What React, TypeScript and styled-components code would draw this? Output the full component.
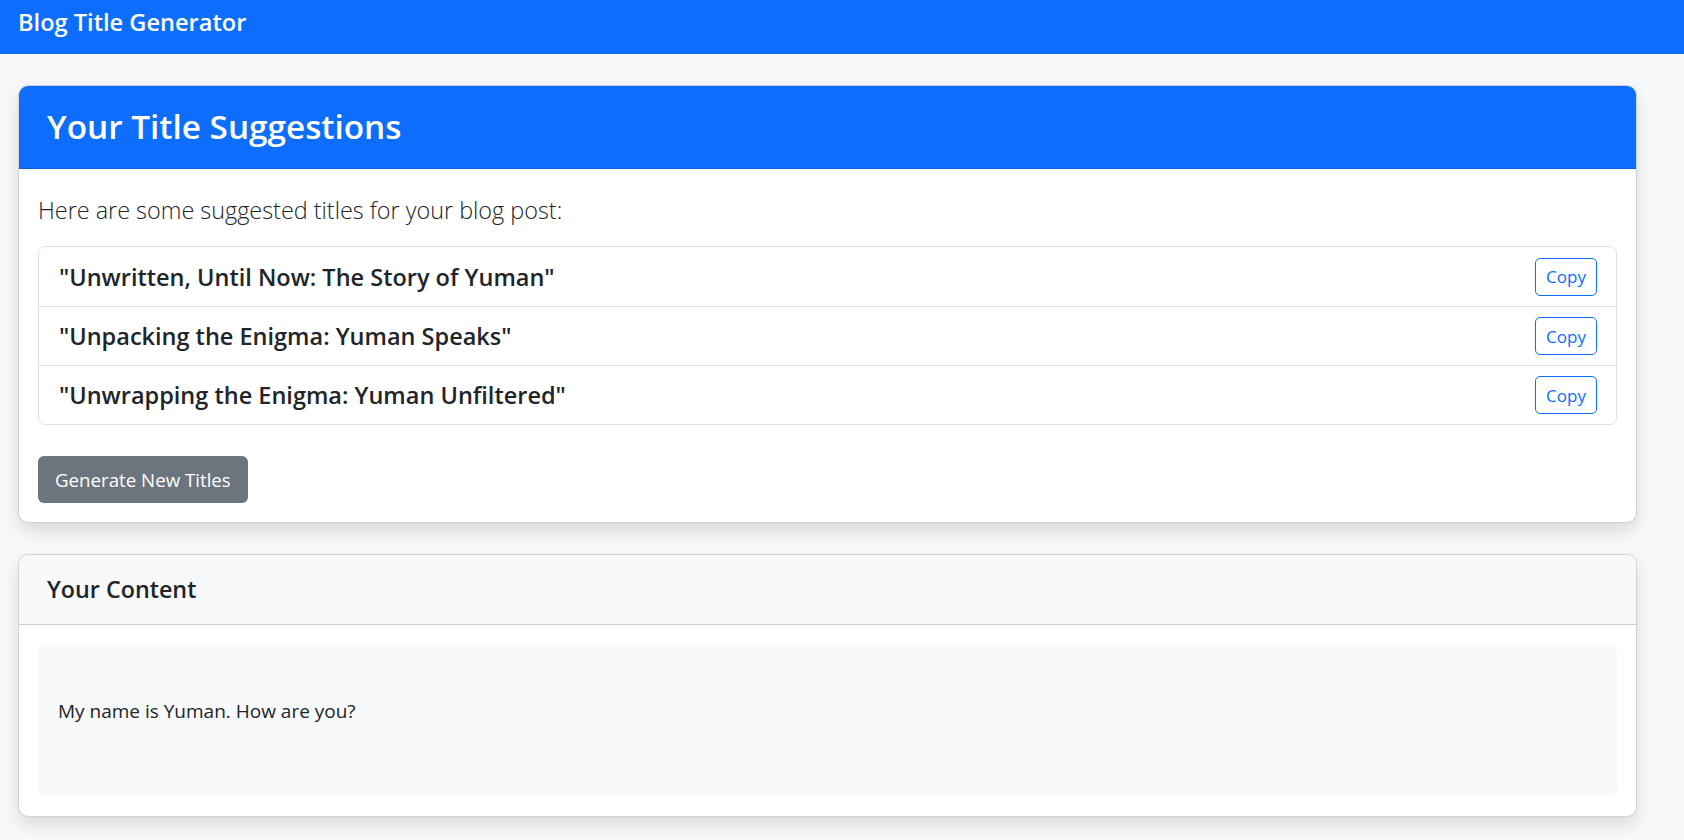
import React from "react";
import styled, { createGlobalStyle } from "styled-components";

const Global = createGlobalStyle`
  html, body { margin: 0; padding: 0; }
  body {
    background: #f8f9fa;
    font-family: "Segoe UI", "Open Sans", "Noto Sans", sans-serif;
    color: #212529;
  }
  * { box-sizing: border-box; }
`;

const Navbar = styled.header`
  height: 54px;
  background: #0d6efd;
  padding: 6px 18px 0;
  display: flex;
  align-items: flex-start;
`;

const Brand = styled.div`
  color: #fff;
  font-size: 23.6px;
  font-weight: 600;
  line-height: 32px;
`;

const Main = styled.main`
  padding: 31px 47px 25px 18px;
  display: flex;
  flex-direction: column;
  gap: 31px;
`;

const Card = styled.section`
  background: #fff;
  border: 1px solid rgba(0, 0, 0, 0.175);
  border-radius: 10px;
  box-shadow: 0 8px 18px rgba(0, 0, 0, 0.13);
  overflow: hidden;
`;

const CardHeader = styled.div<{ $variant: "primary" | "light" }>`
  display: flex;
  align-items: center;
  padding: 0 28px;
  height: ${(p) => (p.$variant === "primary" ? "83px" : "70px")};
  background: ${(p) => (p.$variant === "primary" ? "#0d6efd" : "#f8f9fa")};
  color: ${(p) => (p.$variant === "primary" ? "#fff" : "#212529")};
  border-bottom: 1px solid
    ${(p) => (p.$variant === "primary" ? "#0b5ed7" : "rgba(0,0,0,0.175)")};
`;

const HeaderTitle = styled.h2<{ $size: number }>`
  margin: 0;
  font-size: ${(p) => p.$size}px;
  font-weight: 600;
  line-height: 1.2;
`;

const CardBody = styled.div<{ $top: number; $bottom: number }>`
  padding: ${(p) => p.$top}px 19px ${(p) => p.$bottom}px;
`;

const Lead = styled.p`
  margin: 0 0 17px;
  font-size: 23.4px;
  font-weight: 300;
  line-height: 38px;
`;

const List = styled.ul`
  list-style: none;
  margin: 0 0 31px;
  padding: 0;
  border: 1px solid #dee2e6;
  border-radius: 7px;
`;

const Item = styled.li`
  height: 59px;
  display: flex;
  align-items: center;
  justify-content: space-between;
  padding: 0 19px 0 20px;
  & + & {
    border-top: 1px solid #dee2e6;
  }
`;

const ItemText = styled.span`
  font-size: 23.5px;
  font-weight: 600;
  color: #212529;
`;

const CopyButton = styled.button`
  width: 62px;
  height: 38px;
  padding: 0;
  border: 1px solid #0d6efd;
  border-radius: 5px;
  background: #fff;
  color: #0d6efd;
  font-family: inherit;
  font-size: 17px;
  cursor: pointer;
`;

const SecondaryButton = styled.button`
  height: 47px;
  padding: 0 17px;
  border: none;
  border-radius: 6px;
  background: #6c757d;
  color: #fff;
  font-family: inherit;
  font-size: 18.7px;
  cursor: pointer;
`;

const ContentBox = styled.div`
  height: 151px;
  background: #f8f9fa;
  border-radius: 6px;
  padding: 52px 20px 0;
  font-size: 19px;
  line-height: 29px;
  color: #212529;
`;

const titles = [
  '"Unwritten, Until Now: The Story of Yuman"',
  '"Unpacking the Enigma: Yuman Speaks"',
  '"Unwrapping the Enigma: Yuman Unfiltered"',
];

export default function App() {
  return (
    <>
      <Global />
      <Navbar>
        <Brand>Blog Title Generator</Brand>
      </Navbar>
      <Main>
        <Card>
          <CardHeader $variant="primary">
            <HeaderTitle $size={33.3}>Your Title Suggestions</HeaderTitle>
          </CardHeader>
          <CardBody $top={22} $bottom={19}>
            <Lead>Here are some suggested titles for your blog post:</Lead>
            <List>
              {titles.map((t) => (
                <Item key={t}>
                  <ItemText>{t}</ItemText>
                  <CopyButton>Copy</CopyButton>
                </Item>
              ))}
            </List>
            <SecondaryButton>Generate New Titles</SecondaryButton>
          </CardBody>
        </Card>
        <Card>
          <CardHeader $variant="light">
            <HeaderTitle $size={23.3}>Your Content</HeaderTitle>
          </CardHeader>
          <CardBody $top={20} $bottom={20}>
            <ContentBox>My name is Yuman. How are you?</ContentBox>
          </CardBody>
        </Card>
      </Main>
    </>
  );
}
